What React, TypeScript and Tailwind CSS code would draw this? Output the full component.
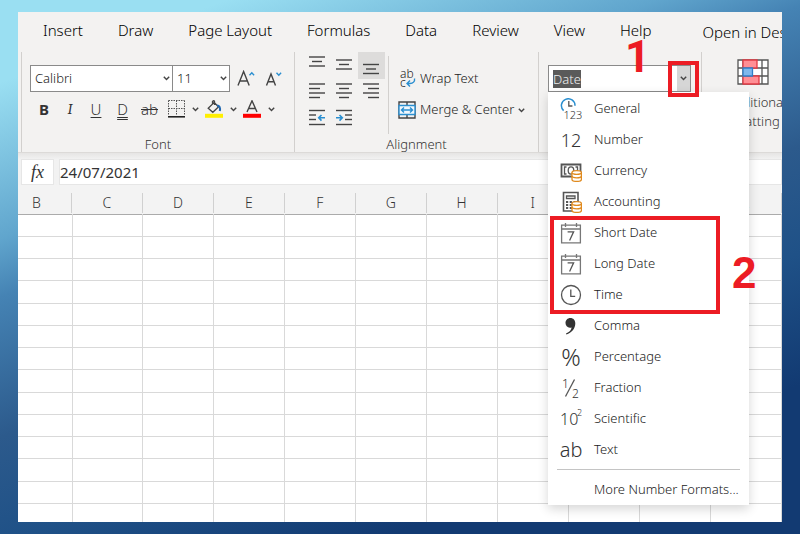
import type { ReactNode } from 'react'
import clsx from 'clsx'

const tabs = ['Insert', 'Draw', 'Page Layout', 'Formulas', 'Data', 'Review', 'View', 'Help']
const columns = ['B', 'C', 'D', 'E', 'F', 'G', 'H', 'I', 'J', 'K', 'L']
const rows = Array.from({ length: 14 }, (_, i) => i)

function Chevron() {
  return (
    <svg width="7" height="5" viewBox="0 0 7 5" fill="none" stroke="#444" strokeWidth="1.4" aria-hidden="true">
      <path d="M0.8 0.8 3.5 3.6 6.2 0.8" />
    </svg>
  )
}

// horizontal strokes given as [x1, x2, y]
function Lines({ lines, children }: { lines: number[][]; children?: ReactNode }) {
  return (
    <svg width="27" height="27" viewBox="0 0 27 27" fill="none" stroke="#444" strokeWidth="1.4" aria-hidden="true">
      {lines.map(([x1, x2, y]) => (
        <path key={y} d={`M${x1} ${y}H${x2}`} />
      ))}
      {children}
    </svg>
  )
}

const alignButtons = [
  { name: 'Top Align', icon: <Lines lines={[[5, 21, 5], [8, 18, 9.5], [5, 21, 14]]} /> },
  { name: 'Middle Align', icon: <Lines lines={[[5, 21, 8], [8, 18, 12.5], [5, 21, 17]]} /> },
  { name: 'Bottom Align', icon: <Lines lines={[[5, 21, 12.5], [8, 18, 17], [5, 21, 21.5]]} />, active: true },
  { name: 'Align Left', icon: <Lines lines={[[5, 21, 5], [5, 16, 9.5], [5, 21, 14], [5, 16, 18.5]]} /> },
  { name: 'Center', icon: <Lines lines={[[5, 21, 5], [8, 18, 9.5], [5, 21, 14], [8, 18, 18.5]]} /> },
  { name: 'Align Right', icon: <Lines lines={[[5, 21, 5], [10, 21, 9.5], [5, 21, 14], [10, 21, 18.5]]} /> },
  {
    name: 'Decrease Indent',
    icon: (
      <Lines lines={[[5, 21, 4.5], [5, 12, 9], [5, 12, 13.5], [5, 21, 18.5]]}>
        <path d="M21 11.8H15M17.5 9 14.7 11.8l2.8 2.8" stroke="#2b8fd0" strokeWidth="1.6" />
      </Lines>
    ),
  },
  {
    name: 'Increase Indent',
    icon: (
      <Lines lines={[[5, 21, 4.5], [14, 21, 9], [14, 21, 13.5], [5, 21, 18.5]]}>
        <path d="M5 11.8H11M8.5 9l2.8 2.8-2.8 2.8" stroke="#2b8fd0" strokeWidth="1.6" />
      </Lines>
    ),
  },
]

function Coins() {
  return (
    <g fill="#fff" stroke="#e08a1e" strokeWidth="1.3">
      <path d="M12 12.5v7c0 1 2 1.9 4.7 1.9s4.7-.9 4.7-1.9v-7" />
      <ellipse cx="16.7" cy="12.5" rx="4.7" ry="1.8" />
      <path d="M12 16c0 1 2 1.8 4.7 1.8s4.7-.8 4.7-1.8" fill="none" />
    </g>
  )
}

function MenuSvg({ children }: { children: ReactNode }) {
  return (
    <svg width="22" height="22" viewBox="0 0 22 22" fill="none" stroke="#555" strokeWidth="1.3" aria-hidden="true">
      {children}
    </svg>
  )
}

function CalendarIcon() {
  return (
    <MenuSvg>
      <path d="M1.6 3.2h18.8v17.6H1.6zM1.6 7h18.8M5.5 1v4M16.5 1v4" stroke="#777" />
      <path d="M7.6 9.8h6L9.6 18.4" />
    </MenuSvg>
  )
}

const formats = [
  {
    name: 'General',
    icon: (
      <MenuSvg>
        <path d="M3.6 12.6A6.8 6.8 0 1 1 15 7.8" stroke="#2b8fd0" strokeWidth="1.5" />
        <path d="M8.8 3v5h3.6" />
        <text x="3.5" y="20.5" fontSize="11" fill="#333" stroke="none">123</text>
      </MenuSvg>
    ),
  },
  { name: 'Number', icon: <span className="text-lg">12</span> },
  {
    name: 'Currency',
    icon: (
      <MenuSvg>
        <path d="M1.5 4.5h19v12h-19z" strokeWidth="1.8" />
        <path d="M6.5 7h-2v7h2M15.5 7h2v4" />
        <ellipse cx="11" cy="10.5" rx="2.8" ry="3.6" />
        <Coins />
      </MenuSvg>
    ),
  },
  {
    name: 'Accounting',
    icon: (
      <MenuSvg>
        <path d="M3.5 1.5h14.5v18.5H3.5z" strokeWidth="1.6" />
        <path d="M6.5 5h8.5v2.5H6.5z" />
        <path d="M6 11h2.2M9.7 11h2.2M13.5 11h2.2M6 14h2.2M9.7 14h2.2M6 17h2.2M9.7 17h2.2" strokeWidth="1.8" />
        <Coins />
      </MenuSvg>
    ),
  },
  { name: 'Short Date', icon: <CalendarIcon /> },
  { name: 'Long Date', icon: <CalendarIcon /> },
  {
    name: 'Time',
    icon: (
      <MenuSvg>
        <circle cx="11" cy="11" r="9.5" />
        <path d="M10.8 5.5v6.8h4.4" />
      </MenuSvg>
    ),
  },
  {
    name: 'Comma',
    icon: (
      <MenuSvg>
        <path
          d="M10.3 3c3 0 5 2.2 5 5.4 0 5-3.5 9.3-8.9 11.1l-.4-.9c3.5-1.7 5.3-3.7 5.6-6.2-.5.3-1.1.4-1.7.4-2.6 0-4.4-2-4.4-4.7C5.5 5.2 7.6 3 10.3 3z"
          fill="#333"
          stroke="none"
        />
      </MenuSvg>
    ),
  },
  { name: 'Percentage', icon: <span className="text-2xl leading-6">%</span> },
  {
    name: 'Fraction',
    icon: (
      <MenuSvg>
        <text x="2" y="11" fontSize="12" fill="#333" stroke="none">1</text>
        <path d="M14.5 2.5 5.5 19.5" />
        <text x="12" y="20.5" fontSize="12" fill="#333" stroke="none">2</text>
      </MenuSvg>
    ),
  },
  {
    name: 'Scientific',
    icon: (
      <MenuSvg>
        <text x="0" y="17" fontSize="16" fill="#333" stroke="none">10</text>
        <text x="17" y="8" fontSize="9" fill="#333" stroke="none">2</text>
      </MenuSvg>
    ),
  },
  { name: 'Text', icon: <span className="text-xl leading-6">ab</span> },
]

function IconButton({ label, className, children }: { label: string; className?: string; children: ReactNode }) {
  return (
    <button type="button" aria-label={label} className={clsx('flex h-6 items-center justify-center', className)}>
      {children}
    </button>
  )
}

function FontGroup() {
  return (
    <section className="flex w-[273px] shrink-0 flex-col border-r border-[#d2d0ce] pl-2">
      <div className="mt-[13px] flex items-center">
        <label className="relative flex items-center">
          <span className="sr-only">Font</span>
          <select className="h-[27px] w-[143px] appearance-none border border-[#8a8a8a] bg-white pl-1 text-[13px] text-[#222]">
            <option>Calibri</option>
          </select>
          <span className="pointer-events-none absolute right-[3px]"><Chevron /></span>
        </label>
        <label className="relative -ml-px flex items-center">
          <span className="sr-only">Font size</span>
          <select className="h-[27px] w-[58px] appearance-none border border-[#8a8a8a] bg-white pl-1 text-[13px] text-[#222]">
            <option>11</option>
          </select>
          <span className="pointer-events-none absolute right-[3px]"><Chevron /></span>
        </label>
        <IconButton label="Increase Font Size" className="ml-1 w-6">
          <svg width="18" height="18" viewBox="0 0 18 18" fill="none" stroke="#444" strokeWidth="1.4">
            <path d="M1 15.5 6.6 1.5 12.2 15.5M3 11h7.2" />
            <path d="M12.5 5.2l2.3-2.4 2.3 2.4" stroke="#2b8fd0" />
          </svg>
        </IconButton>
        <IconButton label="Decrease Font Size" className="ml-1 w-6">
          <svg width="18" height="18" viewBox="0 0 18 18" fill="none" stroke="#444" strokeWidth="1.4">
            <path d="M1.5 15.5 6 4 10.5 15.5M3.1 11.8h5.8" />
            <path d="M11.5 2.8l2.3 2.4 2.3-2.4" stroke="#2b8fd0" />
          </svg>
        </IconButton>
      </div>
      <div className="mt-[5px] ml-px flex items-center text-[15px] text-[#333]">
        <IconButton label="Bold" className="w-[26px] font-bold">B</IconButton>
        <IconButton label="Italic" className="w-[26px] font-serif italic">I</IconButton>
        <IconButton label="Underline" className="w-[26px] underline underline-offset-2">U</IconButton>
        <IconButton label="Double Underline" className="w-[27px] underline decoration-double underline-offset-2">D</IconButton>
        <IconButton label="Strikethrough" className="w-[27px] line-through">ab</IconButton>
        <IconButton label="Borders" className="w-[26px]">
          <svg width="17" height="18" viewBox="0 0 17 18" fill="none" stroke="#555">
            <path d="M.5.5h16M.5.5v15M16.5.5v15M8.5.5v15M.5 8.5h16" strokeDasharray="1.5 1" />
            <path d="M0 16.8h17" stroke="#222" strokeWidth="1.6" />
          </svg>
        </IconButton>
        <IconButton label="More borders" className="w-3"><Chevron /></IconButton>
        <IconButton label="Fill Color" className="w-[26px]">
          <svg width="18" height="18" viewBox="0 0 18 18" fill="none" stroke="#444" strokeWidth="1.3">
            <path d="M7.5 5V1.5q1.5-1.5 2 0V5M9 2.6 3.2 8.3l4.6 4 5.6-5.4L9.5 2.8" />
            <path d="M12 5.5c2.5 0 3.5 2 2.8 5.5" stroke="#1e66b0" strokeWidth="2" />
            <path d="M0 15.8h18" stroke="#ffef00" strokeWidth="4" />
          </svg>
        </IconButton>
        <IconButton label="More fill colors" className="w-3"><Chevron /></IconButton>
        <IconButton label="Font Color" className="w-[26px]">
          <svg width="18" height="18" viewBox="0 0 18 18" fill="none" stroke="#444" strokeWidth="1.4">
            <path d="M4 12 9 .8 14 12M5.6 8.5h6.8" />
            <path d="M0 15.8h18" stroke="#f00" strokeWidth="4" />
          </svg>
        </IconButton>
        <IconButton label="More font colors" className="w-3"><Chevron /></IconButton>
      </div>
      <h2 className="mt-auto pr-2 text-center text-[13px] leading-4 text-[#333]">Font</h2>
    </section>
  )
}

function AlignmentGroup() {
  return (
    <section className="flex w-[244px] shrink-0 flex-col border-r border-[#d2d0ce]">
      <div className="flex pl-[9px]">
        <div className="grid grid-cols-[27px_27px_27px] self-start">
          {alignButtons.map((b) => (
            <button key={b.name} type="button" aria-label={b.name} className={clsx(b.active && 'bg-[#dddcdb]')}>
              {b.icon}
            </button>
          ))}
        </div>
        <div className="mt-1 ml-[3px] flex h-[78px] flex-col border-l border-[#d2d0ce] pt-[11px] pl-[9px] text-[13px] text-[#222]">
          <button type="button" className="flex h-6 items-center gap-1">
            <svg width="18" height="20" viewBox="0 0 18 20" fill="none" aria-hidden="true">
              <text x="2" y="9" fontSize="12" fill="#222">ab</text>
              <text x="2" y="18" fontSize="12" fill="#222">c</text>
              <path d="M16.5 9.5c.6 3-1.5 5-4.5 5H9.5M12 11.5l-3 3 3 3" stroke="#2b8fd0" strokeWidth="1.4" />
            </svg>
            Wrap Text
          </button>
          <button type="button" className="mt-[7px] flex h-6 items-center gap-1 whitespace-nowrap">
            <svg width="18" height="18" viewBox="0 0 18 18" fill="none" stroke="#444" strokeWidth="1.4" aria-hidden="true">
              <path d="M1 1h16v16H1zM9 1v3.5M9 13.5V17" />
              <path d="M1 4.5h16v9H1z" stroke="#2b8fd0" fill="#f2f8fd" />
              <path d="M3.5 9h11M6 6.6 3.5 9 6 11.4M12 6.6 14.5 9 12 11.4" stroke="#2b8fd0" />
            </svg>
            Merge &amp; Center
            <Chevron />
          </button>
        </div>
      </div>
      <h2 className="mt-auto text-center text-[13px] leading-4 text-[#333]">Alignment</h2>
    </section>
  )
}

function FormatMenu() {
  return (
    <div className="absolute top-[26px] -left-px z-10 w-[201px] bg-white pt-px shadow-[0_4px_10px_rgba(0,0,0,0.16)]">
      <ul>
        {formats.map((f) => (
          <li key={f.name}>
            <button type="button" className="flex h-[31px] w-full items-center gap-3 pl-3 text-left text-[13px] text-[#222]">
              <span className="flex w-[22px] shrink-0 justify-center leading-6 text-[#333]">{f.icon}</span>
              {f.name}
            </button>
          </li>
        ))}
      </ul>
      <hr className="mx-[9px] mt-1 border-[#c4c4c4]" />
      <button type="button" className="mt-1 flex h-[31px] w-full items-center pl-[46px] text-[13px] whitespace-nowrap text-[#222]">
        More Number Formats...
      </button>
      <div className="pointer-events-none absolute top-[124px] left-0.5 h-[98px] w-[170px] border-4 border-[#ec1c24]" />
      <span className="absolute top-[159px] left-[184px] font-['Liberation_Sans',sans-serif] text-[44px] leading-[44px] font-bold text-[#ec1c24]">2</span>
    </div>
  )
}

function NumberGroup() {
  return (
    <section className="w-[163px] shrink-0 border-r border-[#d2d0ce] pt-[13px] pl-[9px]">
      <div className="relative flex h-[27px] w-[143px] items-center border border-[#8a8a8a] bg-white pl-1">
        <input
          aria-label="Number Format"
          defaultValue="Date"
          className="field-sizing-content bg-[#5a5a5a] text-[13px] leading-[18px] text-[#f0f0f0] outline-none"
        />
        <button type="button" aria-label="Open number formats" className="ml-auto flex h-full w-[13px] items-center justify-center bg-[#d6d6d6]">
          <Chevron />
        </button>
        <div className="pointer-events-none absolute -top-[5px] left-[119px] z-20 h-[36px] w-[31px] border-4 border-[#ec1c24]" />
        <span className="absolute -top-[31px] left-[76px] font-[Roboto,sans-serif] text-[44px] leading-[44px] font-bold text-[#ec1c24]">1</span>
        <FormatMenu />
      </div>
    </section>
  )
}

function StylesGroup() {
  return (
    <section className="w-[101px] shrink-0">
      <button type="button" className="flex w-full flex-col items-center pt-[7px] text-[13px] leading-[19px] text-[#333]">
        <svg width="32" height="26" viewBox="0 0 32 26" fill="#fff" stroke="#555" strokeWidth="1.3" aria-hidden="true">
          <path d="M1 1h30v24H1zM1 9h30M1 17h30M6 1v24M25 1v24" />
          <path d="M6 1h14v8H6zM6 17h16v8H6z" fill="#ff8f95" stroke="#e23b44" />
          <path d="M6 9h9.5v8H6z" fill="#7fb8ec" stroke="#2f7fc8" />
        </svg>
        <span className="mt-2">Conditional</span>
        <span className="flex items-center gap-1 whitespace-nowrap">Formatting <Chevron /></span>
      </button>
    </section>
  )
}

function Sheet() {
  return (
    <table className="w-full table-fixed border-collapse">
      <thead>
        <tr className="h-[29px] border-b border-[#ababab] bg-[#f3f3f3]">
          {columns.map((c, i) => (
            <th key={c} scope="col" className={clsx('p-0 pt-2 text-sm font-light text-[#333]', i === 0 && 'w-[54px]')}>
              <span className={clsx('block border-r border-[#d0d0d0]', i === 0 && 'pr-4')}>{c}</span>
            </th>
          ))}
        </tr>
      </thead>
      <tbody>
        {rows.map((r) => (
          <tr key={r} className="h-[22px] nth-[4n]:h-[23px]">
            {columns.map((c) => (
              <td key={c} className="border-r border-b border-[#d9d9d9] p-0" />
            ))}
          </tr>
        ))}
      </tbody>
    </table>
  )
}

export default function App() {
  return (
    <div className="h-screen bg-[linear-gradient(160deg,#9adff2_10%,#60a5cd_29%,#4583b4_36%,#2c5a8c_53%,#1f5187_66%,#123a72_82%)] px-[18px] py-3 font-['Noto_Sans','Open_Sans',sans-serif] font-light">
      <main className="flex h-full flex-col overflow-hidden bg-white">
        <nav className="flex h-10 shrink-0 items-center gap-[35px] bg-[#f3f2f1] pb-1 pl-[25px] text-[15px] whitespace-nowrap text-black">
          {tabs.map((t) => (
            <a key={t} href="#">{t}</a>
          ))}
          <a href="#" className="mt-1 ml-4">Open in Desktop App</a>
        </nav>
        <div className="flex h-[101px] shrink-0 border-b border-[#dcdad8] bg-[#f3f2f1] pl-[3px]">
          <div className="flex border-l border-[#d2d0ce]">
            <FontGroup />
            <AlignmentGroup />
            <NumberGroup />
            <StylesGroup />
          </div>
        </div>
        <div className="flex h-8 shrink-0 gap-[5px] bg-linear-to-b from-[#e6e5e4] to-[#f2f2f2] to-20% pt-1.5 pl-[3px]">
          <button type="button" aria-label="Insert Function" className="h-[26px] w-[33px] border border-[#e6e6e6] bg-white font-['Liberation_Serif',serif] text-lg leading-5 text-[#333] italic">
            fx
          </button>
          <input
            aria-label="Formula Bar"
            defaultValue="24/07/2021"
            className="h-[26px] min-w-0 flex-1 border border-[#e6e6e6] bg-white text-[15px] font-normal text-[#333] outline-none"
          />
        </div>
        <Sheet />
      </main>
    </div>
  )
}
